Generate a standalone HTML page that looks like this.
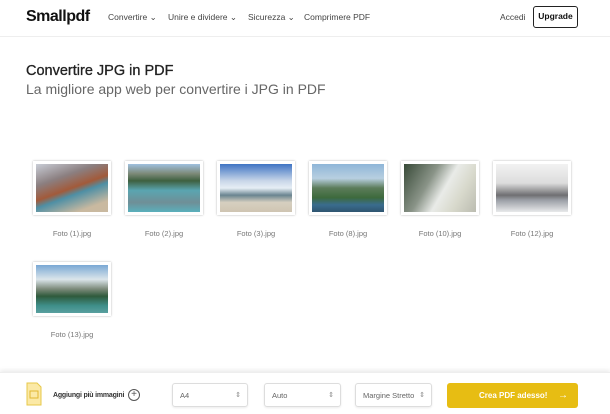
<!DOCTYPE html>
<html><head><meta charset="utf-8"><style>
*{margin:0;padding:0;box-sizing:border-box}
body{width:610px;height:414px;overflow:hidden;background:#fff;font-family:"Liberation Sans",sans-serif;position:relative;color:#333}
.hdr{position:absolute;left:0;top:0;width:610px;height:37px;border-bottom:1px solid #eee}
.logo{position:absolute;left:26px;top:8px;font-weight:bold;font-size:16px;color:#111;letter-spacing:-0.5px}
.nav{position:absolute;top:12px;font-size:8.5px;color:#444}
.up{position:absolute;left:533px;top:6px;width:45px;height:22px;border:1.5px solid #222;border-radius:3px;font-size:8.5px;font-weight:bold;text-align:center;line-height:19px;color:#111}
h1{position:absolute;left:26px;top:63px;font-size:14.5px;font-weight:normal;color:#222;-webkit-text-stroke:0.3px #222}
h2{position:absolute;left:26px;top:81px;font-size:14px;font-weight:normal;color:#666}
.card{position:absolute;width:78px;height:54px;background:#fff;box-shadow:0 0 2px rgba(0,0,0,.3);padding:3px}
.card div{width:100%;height:100%}
.lb{position:absolute;font-size:7.5px;color:#777;width:78px;text-align:center}
.bar{position:absolute;left:0;top:372px;width:610px;height:42px;background:#fff;box-shadow:0 -2px 4px rgba(0,0,0,.08);border-top:1px solid #eee}
.sel{position:absolute;top:383px;height:24px;border:1px solid #ddd;border-radius:3px;font-size:7.5px;color:#666;padding:7px 7px;box-shadow:0 1px 2px rgba(0,0,0,.08)}
.sel:after{content:"⇕";position:absolute;right:6px;top:7px;font-size:7px;color:#888}
</style></head><body>
<div class="hdr">
<div class="logo">Smallpdf</div>
<div class="nav" style="left:108px">Convertire ⌄</div>
<div class="nav" style="left:168px">Unire e dividere ⌄</div>
<div class="nav" style="left:248px">Sicurezza ⌄</div>
<div class="nav" style="left:304px">Comprimere PDF</div>
<div class="nav" style="left:500px">Accedi</div>
<div class="up">Upgrade</div>
</div>
<h1>Convertire JPG in PDF</h1>
<h2>La migliore app web per convertire i JPG in PDF</h2>

<div class="card" style="left:33px;top:161px"><div style="background:linear-gradient(160deg,#c9cdd6 0%,#8b7f80 30%,#a25a3a 50%,#4e8fa5 60%,#c9b9a0 85%)"></div></div>
<div class="lb" style="left:33px;top:229px">Foto (1).jpg</div>
<div class="card" style="left:125px;top:161px"><div style="background:linear-gradient(180deg,#9fc0de 0%,#7d8a78 20%,#3e6040 35%,#5aa5b0 55%,#6f8f97 80%,#5ab0bc 100%)"></div></div>
<div class="lb" style="left:125px;top:229px">Foto (2).jpg</div>
<div class="card" style="left:217px;top:161px"><div style="background:linear-gradient(180deg,#3f74c4 0%,#c8d6e8 35%,#e6eef5 50%,#6a8490 65%,#d6cfc0 80%,#cfc5b2 100%)"></div></div>
<div class="lb" style="left:217px;top:229px">Foto (3).jpg</div>
<div class="card" style="left:309px;top:161px"><div style="background:linear-gradient(180deg,#8fb6d8 0%,#b8cfe0 30%,#5c7c5a 50%,#3d6a3c 70%,#3a6c8e 85%,#2f5570 100%)"></div></div>
<div class="lb" style="left:309px;top:229px">Foto (8).jpg</div>
<div class="card" style="left:401px;top:161px"><div style="background:linear-gradient(120deg,#384a38 0%,#8a9488 35%,#e9ebe8 55%,#d8d9cc 75%,#bbbcb0 100%)"></div></div>
<div class="lb" style="left:401px;top:229px">Foto (10).jpg</div>
<div class="card" style="left:493px;top:161px"><div style="background:linear-gradient(180deg,#f2f2f2 0%,#dcdcdc 40%,#6f6f72 65%,#9a9ea5 75%,#e8e9ea 100%)"></div></div>
<div class="lb" style="left:493px;top:229px">Foto (12).jpg</div>
<div class="card" style="left:33px;top:262px"><div style="background:linear-gradient(180deg,#7aa8d4 0%,#dbe5ea 30%,#7c8a7a 50%,#2f5a3c 65%,#3f8f8a 85%,#5aa0a0 100%)"></div></div>
<div class="lb" style="left:33px;top:330px">Foto (13).jpg</div>

<div class="bar"></div>
<svg style="position:absolute;left:26px;top:382px" width="16" height="24" viewBox="0 0 16 24"><path d="M1 1h10l4 4v18H1z" fill="#fbe9a6" stroke="#e7c84a"/><rect x="4" y="9" width="8" height="7" fill="none" stroke="#e0b832"/></svg>
<div style="position:absolute;left:53px;top:392px;font-size:7px;font-weight:bold;color:#333;letter-spacing:-0.2px">Aggiungi più immagini</div>
<div style="position:absolute;left:128px;top:389px;width:12px;height:12px;border:1px solid #555;border-radius:50%;font-size:10px;line-height:10px;text-align:center;color:#555">+</div>
<div class="sel" style="left:172px;width:76px">A4</div>
<div class="sel" style="left:264px;width:77px">Auto</div>
<div class="sel" style="left:355px;width:77px">Margine Stretto</div>
<div style="position:absolute;left:447px;top:383px;width:131px;height:25px;background:#e7bd13;border-radius:3px;color:#fff;font-size:8px;font-weight:bold;line-height:25px;padding-left:32px">Crea PDF adesso!<span style="position:absolute;right:10px;font-size:10px">→</span></div>
</body></html>
